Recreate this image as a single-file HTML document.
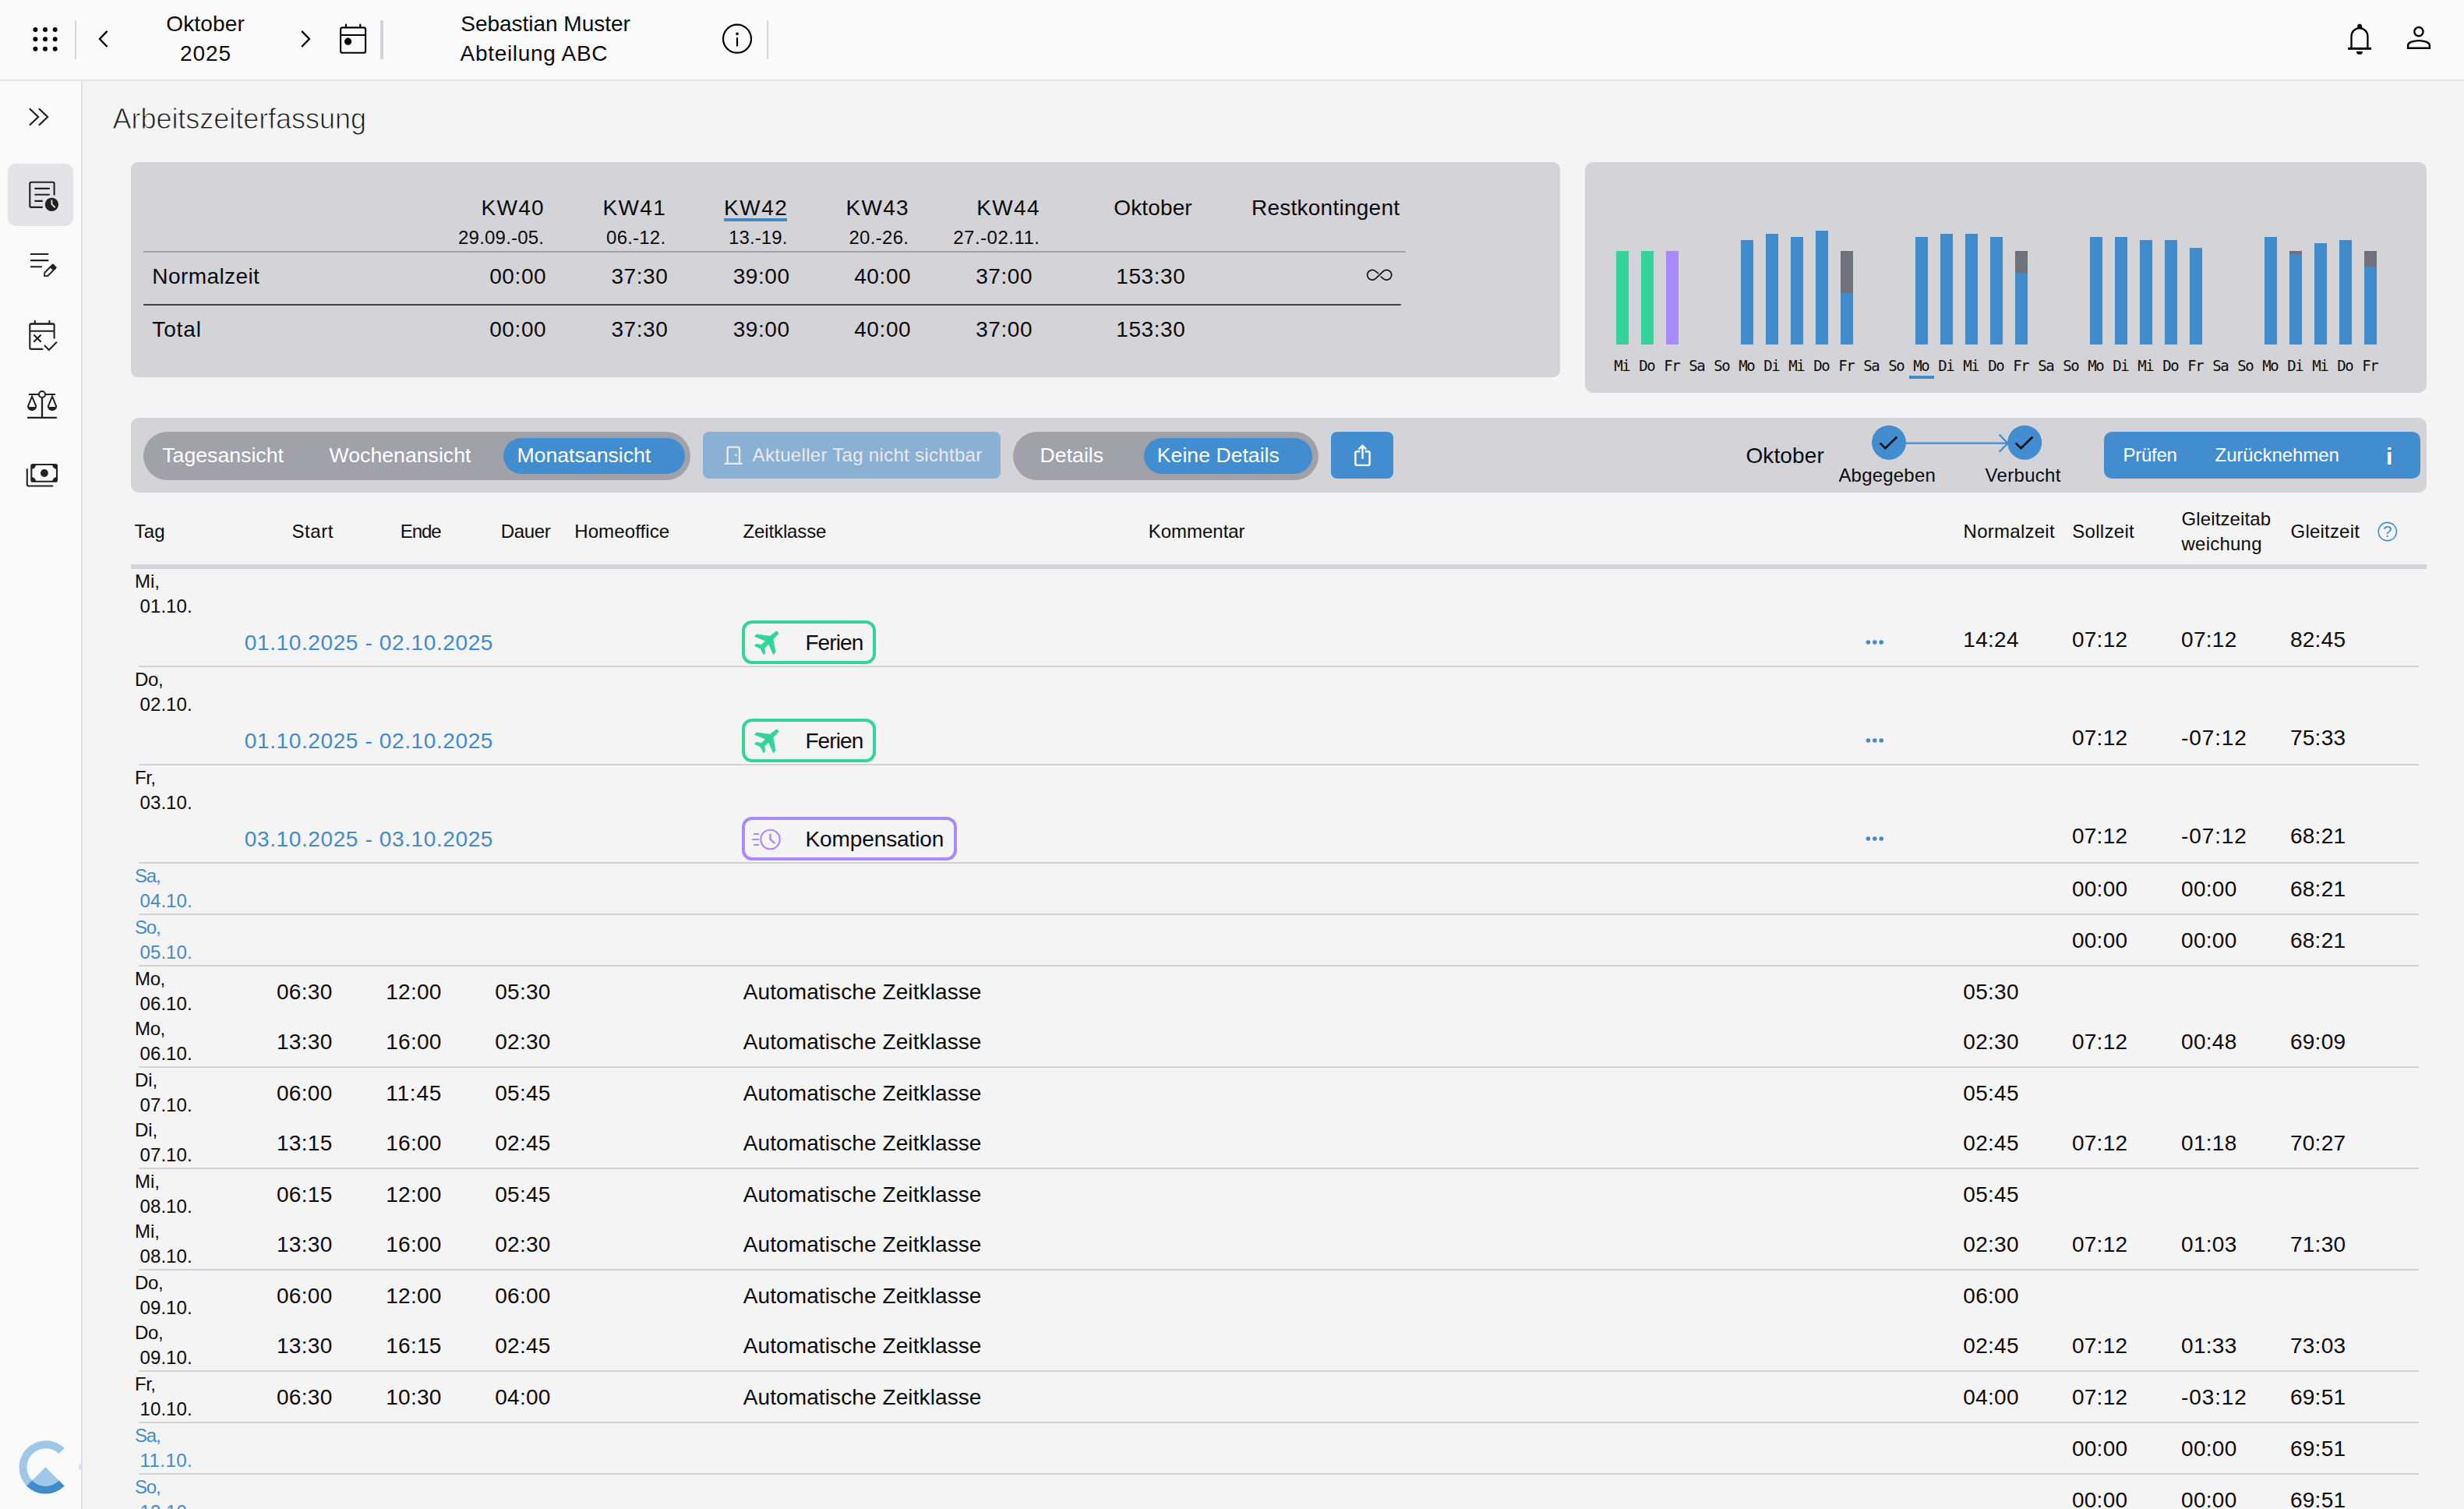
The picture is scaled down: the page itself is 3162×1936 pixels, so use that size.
<!DOCTYPE html>
<html lang="de"><head><meta charset="utf-8"><meta name="viewport" content="width=3162"><title>Arbeitszeiterfassung</title><style>
*{box-sizing:border-box;margin:0;padding:0}
html,body{width:3162px;height:1936px;overflow:hidden}
body{position:relative;background:#f4f4f5;font-family:"Liberation Sans", sans-serif;color:#0b0b0c;}
.b,.t,.i{position:absolute}
.t{white-space:pre;display:block}
.i{overflow:visible}
.m{font-family:"DejaVu Sans Mono", "Liberation Mono", monospace}
.bd{font-weight:bold}
.lt{-webkit-text-stroke:0.9px #f4f4f5}
header,nav,main,section,h1,table{display:block}
h1{font-weight:normal;font-size:inherit}
</style></head>
<body>
<header><div class="b" style="left:0px;top:0px;width:3162px;height:102px;background:#fafafa;"></div><div class="b" style="left:0px;top:102px;width:3162px;height:2px;background:#e3e3e7;"></div><svg class="i" style="left:40px;top:32px" width="36" height="36" viewBox="40 32 36 36" ><g fill="#000"><circle cx="45.4" cy="38" r="2.95"/><circle cx="58" cy="38" r="2.95"/><circle cx="70.7" cy="38" r="2.95"/><circle cx="45.4" cy="50.3" r="2.95"/><circle cx="58" cy="50.3" r="2.95"/><circle cx="70.7" cy="50.3" r="2.95"/><circle cx="45.4" cy="62.7" r="2.95"/><circle cx="58" cy="62.7" r="2.95"/><circle cx="70.7" cy="62.7" r="2.95"/></g></svg><div class="b" style="left:96px;top:26px;width:2px;height:50px;background:#d6d6db;"></div><svg class="i" style="left:120px;top:34px" width="26" height="32" viewBox="120 34 26 32" ><path fill="none" stroke="#000" stroke-width="2.3" stroke-linecap="butt" stroke-linejoin="miter" d="M137.6 39.9 L127.9 49.95 L137.6 60"/></svg><span class="t" id="t0" style="top:17px;font-size:28px;line-height:28px;letter-spacing:0.165px;left:-336.42px;width:1200px;text-align:center;">Oktober</span><span class="t" id="t1" style="top:55px;font-size:28px;line-height:28px;letter-spacing:0.901px;left:-336.05px;width:1200px;text-align:center;">2025</span><svg class="i" style="left:380px;top:34px" width="26" height="32" viewBox="380 34 26 32" ><path fill="none" stroke="#000" stroke-width="2.3" stroke-linecap="butt" stroke-linejoin="miter" d="M387.2 39.9 L396.9 49.95 L387.2 60"/></svg><svg class="i" style="left:432px;top:28px" width="42" height="44" viewBox="432 28 42 44" ><g fill="none" stroke="#000" stroke-width="2.1" stroke-linecap="butt" stroke-linejoin="round"><rect x="437.1" y="35.4" width="32" height="32.4" rx="2.4"/><path d="M437.1 45 H469.1 M443.9 30.8 V35.4 M462.3 30.8 V35.4"/></g><circle cx="446.6" cy="53.2" r="4.6" fill="#000"/></svg><div class="b" style="left:488px;top:26px;width:4px;height:50px;background:#d4d4d8;"></div><span class="t" id="t2" style="top:17px;font-size:28px;line-height:28px;letter-spacing:-0.026px;left:591.30px;">Sebastian Muster</span><span class="t" id="t3" style="top:55px;font-size:28px;line-height:28px;letter-spacing:0.702px;left:590.50px;">Abteilung ABC</span><svg class="i" style="left:924px;top:28px" width="44" height="44" viewBox="924 28 44 44" ><circle cx="946" cy="49.7" r="18" fill="none" stroke="#000" stroke-width="2.2"/><circle cx="946" cy="43.4" r="1.8" fill="#000"/><rect x="944.9" y="48.2" width="2.2" height="11.2" fill="#000"/></svg><div class="b" style="left:984px;top:26px;width:2px;height:50px;background:#d6d6db;"></div><svg class="i" style="left:3008px;top:26px" width="40" height="48" viewBox="3008 26 40 48" ><g fill="none" stroke="#000" stroke-width="2.3" stroke-linecap="butt" stroke-linejoin="miter"><path d="M3017.5 61 V46.5 A10.45 10.45 0 0 1 3038.4 46.5 V61"/></g><rect x="3013.1" y="60.9" width="29.9" height="2.9" fill="#000"/><path d="M3025.2 36 V33.7 A2.95 2.95 0 0 1 3031.1 33.7 V36 Z" fill="#000"/><path d="M3024 65.9 H3031.9 A3.95 3.95 0 0 1 3024 65.9 Z" fill="#000"/></svg><svg class="i" style="left:3084px;top:28px" width="40" height="42" viewBox="3084 28 40 42" ><g fill="none" stroke="#000" stroke-width="2.4" stroke-linejoin="miter"><circle cx="3103.95" cy="40.6" r="5.65"/><path d="M3090.1 61.75 V58 A13.9 5.9 0 0 1 3117.9 58 V61.75 Z"/></g></svg></header><nav><div class="b" style="left:0px;top:104px;width:104px;height:1832px;background:#fafafa;"></div><div class="b" style="left:104px;top:104px;width:2px;height:1832px;background:#e2e2e6;"></div><div class="b" style="left:101px;top:1878px;width:3px;height:8px;background:#d3e3f3;border-radius:2px;"></div><svg class="i" style="left:32px;top:134px" width="36" height="32" viewBox="32 134 36 32" ><path fill="none" stroke="#222" stroke-width="2.3" stroke-linecap="round" stroke-linejoin="round" d="M38.6 140 L49.2 150 L38.6 160 M50.6 140 L61.2 150 L50.6 160"/></svg><div class="b" style="left:10px;top:210px;width:84px;height:80px;background:#e4e4e7;border-radius:10px;"></div><svg class="i" style="left:32px;top:228px" width="48" height="48" viewBox="32 228 48 48" ><g fill="none" stroke="#222" stroke-width="2.1" stroke-linecap="butt" stroke-linejoin="round"><path d="M69.6 250.4 V235.6 A1.8 1.8 0 0 0 67.8 233.8 H40.1 A1.8 1.8 0 0 0 38.3 235.6 V264.1 A1.8 1.8 0 0 0 40.1 265.9 H54.8"/><path d="M44.4 241.9 H63.8 M44.4 249.8 H63.8 M44.4 257.9 H54.8"/></g><circle cx="66.4" cy="262.3" r="8.6" fill="#222"/><path d="M66.4 256.6 V261.9 L70.7 266.4" fill="none" stroke="#e4e4e7" stroke-width="1.9" stroke-linecap="butt" stroke-linejoin="miter"/></svg><svg class="i" style="left:32px;top:318px" width="48" height="42" viewBox="32 318 48 42" ><g fill="none" stroke="#222" stroke-width="2.1" stroke-linecap="butt" stroke-linejoin="round"><path d="M39 326 H62.2 M39 334.1 H62.2 M39 342.3 H53.9"/></g><path d="M56.2 354.95 V349.55 L66.72 339 Q67.85 337.86 68.98 339 L72.16 342.17 Q73.29 343.3 72.16 344.43 L61.62 354.95 Z" fill="#222"/><path d="M58 350.5 L64.87 343.66 L67.49 346.28 L60.63 353.14 L57.9 353.2 Z" fill="#fafafa"/></svg><svg class="i" style="left:32px;top:406px" width="48" height="48" viewBox="32 406 48 48" ><g fill="none" stroke="#222" stroke-width="2.1" stroke-linecap="butt" stroke-linejoin="round"><path d="M69.6 434.4 V417 A1.8 1.8 0 0 0 67.8 415.2 H40.1 A1.8 1.8 0 0 0 38.3 417 V446.1 A1.8 1.8 0 0 0 40.1 447.9 H55.3"/><path d="M38.3 424.7 H69.6 M44.8 411 V415.2 M63.4 411 V415.2 M39 415.7 H69"/><path d="M43.3 429.4 L52.7 438.8 M52.7 429.4 L43.3 438.8"/><path d="M56.9 443 L62.8 448.9 L72.9 438.7" stroke-linejoin="miter"/></g></svg><svg class="i" style="left:30px;top:498px" width="50" height="44" viewBox="30 498 50 44" ><g fill="none" stroke="#222" stroke-width="2.1" stroke-linecap="butt" stroke-linejoin="round"><path d="M36.9 506 H49.8 M58.2 506 H71 M35.1 535.9 H72.9"/><path d="M54 510.2 V535.9" stroke-width="2.3"/><circle cx="54" cy="506" r="4.05"/></g><path d="M41.1 508.6 L35.9 521.4 A5.3 5.3 0 0 0 46.300000000000004 521.4 Z" fill="none" stroke="#222" stroke-width="2" stroke-linejoin="miter" stroke-miterlimit="8"/><path d="M35.7 522 H46.5 A5.4 5 0 0 1 35.7 522 Z" fill="#222"/><path d="M67 508.6 L61.8 521.4 A5.3 5.3 0 0 0 72.2 521.4 Z" fill="none" stroke="#222" stroke-width="2" stroke-linejoin="miter" stroke-miterlimit="8"/><path d="M61.6 522 H72.4 A5.4 5 0 0 1 61.6 522 Z" fill="#222"/></svg><svg class="i" style="left:30px;top:590px" width="50" height="38" viewBox="30 590 50 38" ><path fill="none" stroke="#222" stroke-width="2.1" stroke-linecap="butt" stroke-linejoin="round" d="M34.8 601.2 V621.7 A1.8 1.8 0 0 0 36.6 623.5 H68.2"/><rect x="40.3" y="596" width="32.7" height="21.8" rx="1.8" fill="none" stroke="#222" stroke-width="2.1"/><path d="M40.3 596 H46.2 A5.9 5.9 0 0 1 40.3 601.9 Z M73 596 V601.9 A5.9 5.9 0 0 1 67.1 596 Z M40.3 617.8 V611.9 A5.9 5.9 0 0 1 46.2 617.8 Z M73 617.8 H67.1 A5.9 5.9 0 0 1 73 611.9 Z" fill="#222"/><circle cx="56.9" cy="607" r="4.9" fill="#222"/></svg><svg class="i" style="left:20px;top:1844px" width="80" height="78" viewBox="20 1844 80 78" ><path d="M34.08 1906.52 A34.4 34.4 0 0 1 82.72 1857.88 L75.51 1865.09 A24.2 24.2 0 0 0 41.29 1899.31 Z" fill="#9fc7ea"/><path d="M82.72 1906.52 A34.4 34.4 0 0 1 34.08 1906.52 L41.29 1899.31 A24.2 24.2 0 0 0 75.51 1899.31 Z" fill="#428bca"/><path d="M75.65 1899.45 A24.4 24.4 0 0 1 41.15 1899.45 L58.40 1882.20 A0 0 0 0 0 58.40 1882.20 Z" fill="#9fc7ea"/></svg></nav><main><h1><span class="t lt" id="t4" style="top:135px;font-size:36px;line-height:36px;color:#18181b;letter-spacing:-0.035px;left:144.50px;">Arbeitszeiterfassung</span></h1><section><div class="b" style="left:168px;top:208px;width:1834px;height:276px;background:#d4d4d8;border-radius:9px;"></div><span class="t" id="t5" style="top:253px;font-size:28px;line-height:28px;letter-spacing:1.317px;right:2463.08px;">KW40</span><span class="t" id="t6" style="top:293px;font-size:24px;line-height:24px;letter-spacing:0.212px;right:2463.79px;">29.09.-05.</span><span class="t" id="t7" style="top:253px;font-size:28px;line-height:28px;letter-spacing:1.317px;right:2306.98px;">KW41</span><span class="t" id="t8" style="top:293px;font-size:24px;line-height:24px;letter-spacing:0.214px;right:2307.69px;">06.-12.</span><span class="t" id="t9" style="top:253px;font-size:28px;line-height:28px;letter-spacing:1.583px;right:2150.52px;">KW42</span><span class="t" id="t10" style="top:293px;font-size:24px;line-height:24px;letter-spacing:0.097px;right:2151.60px;">13.-19.</span><span class="t" id="t11" style="top:253px;font-size:28px;line-height:28px;letter-spacing:1.250px;right:1995.15px;">KW43</span><span class="t" id="t12" style="top:293px;font-size:24px;line-height:24px;letter-spacing:0.314px;right:1995.69px;">20.-26.</span><span class="t" id="t13" style="top:253px;font-size:28px;line-height:28px;letter-spacing:1.383px;right:1827.02px;">KW44</span><span class="t" id="t14" style="top:293px;font-size:24px;line-height:24px;letter-spacing:0.499px;right:1827.50px;">27.-02.11.</span><div class="b" style="left:928.6px;top:280px;width:81.39999999999998px;height:4px;background:#428bca;"></div><span class="t" id="t15" style="top:253px;font-size:28px;line-height:28px;letter-spacing:0.132px;left:1429.30px;">Oktober</span><span class="t" id="t16" style="top:253px;font-size:28px;line-height:28px;letter-spacing:0.246px;left:1606.00px;">Restkontingent</span><div class="b" style="left:184px;top:322px;width:1620px;height:2px;background:#a1a1aa;"></div><span class="t" id="t17" style="top:341px;font-size:28px;line-height:28px;letter-spacing:0.421px;left:195.30px;">Normalzeit</span><span class="t" id="t18" style="top:341px;font-size:28px;line-height:28px;letter-spacing:0.580px;right:2460.82px;">00:00</span><span class="t" id="t19" style="top:341px;font-size:28px;line-height:28px;letter-spacing:0.580px;right:2304.62px;">37:30</span><span class="t" id="t20" style="top:341px;font-size:28px;line-height:28px;letter-spacing:0.580px;right:2148.42px;">39:00</span><span class="t" id="t21" style="top:341px;font-size:28px;line-height:28px;letter-spacing:0.580px;right:1992.82px;">40:00</span><span class="t" id="t22" style="top:341px;font-size:28px;line-height:28px;letter-spacing:0.580px;right:1836.92px;">37:00</span><span class="t" id="t23" style="top:341px;font-size:28px;line-height:28px;letter-spacing:0.552px;left:1432.30px;">153:30</span><span class="t" id="t24" style="top:409px;font-size:28px;line-height:28px;letter-spacing:0.861px;left:195.30px;">Total</span><span class="t" id="t25" style="top:409px;font-size:28px;line-height:28px;letter-spacing:0.580px;right:2460.82px;">00:00</span><span class="t" id="t26" style="top:409px;font-size:28px;line-height:28px;letter-spacing:0.580px;right:2304.62px;">37:30</span><span class="t" id="t27" style="top:409px;font-size:28px;line-height:28px;letter-spacing:0.580px;right:2148.42px;">39:00</span><span class="t" id="t28" style="top:409px;font-size:28px;line-height:28px;letter-spacing:0.580px;right:1992.82px;">40:00</span><span class="t" id="t29" style="top:409px;font-size:28px;line-height:28px;letter-spacing:0.580px;right:1836.92px;">37:00</span><span class="t" id="t30" style="top:409px;font-size:28px;line-height:28px;letter-spacing:0.552px;left:1432.30px;">153:30</span><svg class="i" style="left:1750px;top:342px" width="40" height="22" viewBox="1750 342 40 22" ><path d="M1768.6 350.6 L1765.1 347.9 A6.35 6.35 0 1 0 1765.1 357.6 L1775.3 347.9 A6.35 6.35 0 1 1 1775.3 357.6 L1772.3 355.1" fill="none" stroke="#111" stroke-width="1.7" stroke-linejoin="round" stroke-linecap="round"/></svg><div class="b" style="left:184px;top:389.6px;width:1614px;height:2.1999999999999886px;background:#3f3f46;border-radius:2px;"></div></section><section><div class="b" style="left:2034px;top:208px;width:1080px;height:296px;background:#d4d4d8;border-radius:10px;"></div><div class="b" style="left:2074px;top:322px;width:16px;height:120px;background:#34d399;"></div><span class="t m" id="t31" style="top:460px;font-size:19px;line-height:19px;letter-spacing:-1.291px;left:1481.35px;width:1200px;text-align:center;">Mi</span><div class="b" style="left:2106px;top:322px;width:16px;height:120px;background:#34d399;"></div><span class="t m" id="t32" style="top:460px;font-size:19px;line-height:19px;letter-spacing:-1.291px;left:1513.35px;width:1200px;text-align:center;">Do</span><div class="b" style="left:2138px;top:322px;width:16px;height:120px;background:#a78bfa;"></div><span class="t m" id="t33" style="top:460px;font-size:19px;line-height:19px;letter-spacing:-1.291px;left:1545.35px;width:1200px;text-align:center;">Fr</span><span class="t m" id="t34" style="top:460px;font-size:19px;line-height:19px;letter-spacing:-1.291px;left:1577.35px;width:1200px;text-align:center;">Sa</span><span class="t m" id="t35" style="top:460px;font-size:19px;line-height:19px;letter-spacing:-1.291px;left:1609.35px;width:1200px;text-align:center;">So</span><div class="b" style="left:2234px;top:308px;width:16px;height:134px;background:#428bca;"></div><span class="t m" id="t36" style="top:460px;font-size:19px;line-height:19px;letter-spacing:-1.291px;left:1641.35px;width:1200px;text-align:center;">Mo</span><div class="b" style="left:2266px;top:300px;width:16px;height:142px;background:#428bca;"></div><span class="t m" id="t37" style="top:460px;font-size:19px;line-height:19px;letter-spacing:-1.291px;left:1673.35px;width:1200px;text-align:center;">Di</span><div class="b" style="left:2298px;top:304px;width:16px;height:138px;background:#428bca;"></div><span class="t m" id="t38" style="top:460px;font-size:19px;line-height:19px;letter-spacing:-1.291px;left:1705.35px;width:1200px;text-align:center;">Mi</span><div class="b" style="left:2330px;top:296px;width:16px;height:146px;background:#428bca;"></div><span class="t m" id="t39" style="top:460px;font-size:19px;line-height:19px;letter-spacing:-1.291px;left:1737.35px;width:1200px;text-align:center;">Do</span><div class="b" style="left:2362px;top:322px;width:16px;height:120px;background:#71717a;"></div><div class="b" style="left:2362px;top:376px;width:16px;height:66px;background:#428bca;"></div><span class="t m" id="t40" style="top:460px;font-size:19px;line-height:19px;letter-spacing:-1.291px;left:1769.35px;width:1200px;text-align:center;">Fr</span><span class="t m" id="t41" style="top:460px;font-size:19px;line-height:19px;letter-spacing:-1.291px;left:1801.35px;width:1200px;text-align:center;">Sa</span><span class="t m" id="t42" style="top:460px;font-size:19px;line-height:19px;letter-spacing:-1.291px;left:1833.35px;width:1200px;text-align:center;">So</span><div class="b" style="left:2458px;top:304px;width:16px;height:138px;background:#428bca;"></div><span class="t m" id="t43" style="top:460px;font-size:19px;line-height:19px;letter-spacing:-1.291px;left:1865.35px;width:1200px;text-align:center;">Mo</span><div class="b" style="left:2490px;top:300px;width:16px;height:142px;background:#428bca;"></div><span class="t m" id="t44" style="top:460px;font-size:19px;line-height:19px;letter-spacing:-1.291px;left:1897.35px;width:1200px;text-align:center;">Di</span><div class="b" style="left:2522px;top:300px;width:16px;height:142px;background:#428bca;"></div><span class="t m" id="t45" style="top:460px;font-size:19px;line-height:19px;letter-spacing:-1.291px;left:1929.35px;width:1200px;text-align:center;">Mi</span><div class="b" style="left:2554px;top:304px;width:16px;height:138px;background:#428bca;"></div><span class="t m" id="t46" style="top:460px;font-size:19px;line-height:19px;letter-spacing:-1.291px;left:1961.35px;width:1200px;text-align:center;">Do</span><div class="b" style="left:2586px;top:322px;width:16px;height:120px;background:#71717a;"></div><div class="b" style="left:2586px;top:350px;width:16px;height:92px;background:#428bca;"></div><span class="t m" id="t47" style="top:460px;font-size:19px;line-height:19px;letter-spacing:-1.291px;left:1993.35px;width:1200px;text-align:center;">Fr</span><span class="t m" id="t48" style="top:460px;font-size:19px;line-height:19px;letter-spacing:-1.291px;left:2025.35px;width:1200px;text-align:center;">Sa</span><span class="t m" id="t49" style="top:460px;font-size:19px;line-height:19px;letter-spacing:-1.291px;left:2057.35px;width:1200px;text-align:center;">So</span><div class="b" style="left:2682px;top:304px;width:16px;height:138px;background:#428bca;"></div><span class="t m" id="t50" style="top:460px;font-size:19px;line-height:19px;letter-spacing:-1.291px;left:2089.35px;width:1200px;text-align:center;">Mo</span><div class="b" style="left:2714px;top:304px;width:16px;height:138px;background:#428bca;"></div><span class="t m" id="t51" style="top:460px;font-size:19px;line-height:19px;letter-spacing:-1.291px;left:2121.35px;width:1200px;text-align:center;">Di</span><div class="b" style="left:2746px;top:308px;width:16px;height:134px;background:#428bca;"></div><span class="t m" id="t52" style="top:460px;font-size:19px;line-height:19px;letter-spacing:-1.291px;left:2153.35px;width:1200px;text-align:center;">Mi</span><div class="b" style="left:2778px;top:308px;width:16px;height:134px;background:#428bca;"></div><span class="t m" id="t53" style="top:460px;font-size:19px;line-height:19px;letter-spacing:-1.291px;left:2185.35px;width:1200px;text-align:center;">Do</span><div class="b" style="left:2810px;top:318px;width:16px;height:124px;background:#428bca;"></div><span class="t m" id="t54" style="top:460px;font-size:19px;line-height:19px;letter-spacing:-1.291px;left:2217.35px;width:1200px;text-align:center;">Fr</span><span class="t m" id="t55" style="top:460px;font-size:19px;line-height:19px;letter-spacing:-1.291px;left:2249.35px;width:1200px;text-align:center;">Sa</span><span class="t m" id="t56" style="top:460px;font-size:19px;line-height:19px;letter-spacing:-1.291px;left:2281.35px;width:1200px;text-align:center;">So</span><div class="b" style="left:2906px;top:304px;width:16px;height:138px;background:#428bca;"></div><span class="t m" id="t57" style="top:460px;font-size:19px;line-height:19px;letter-spacing:-1.291px;left:2313.35px;width:1200px;text-align:center;">Mo</span><div class="b" style="left:2938px;top:322px;width:16px;height:120px;background:#71717a;"></div><div class="b" style="left:2938px;top:326px;width:16px;height:116px;background:#428bca;"></div><span class="t m" id="t58" style="top:460px;font-size:19px;line-height:19px;letter-spacing:-1.291px;left:2345.35px;width:1200px;text-align:center;">Di</span><div class="b" style="left:2970px;top:312px;width:16px;height:130px;background:#428bca;"></div><span class="t m" id="t59" style="top:460px;font-size:19px;line-height:19px;letter-spacing:-1.291px;left:2377.35px;width:1200px;text-align:center;">Mi</span><div class="b" style="left:3002px;top:308px;width:16px;height:134px;background:#428bca;"></div><span class="t m" id="t60" style="top:460px;font-size:19px;line-height:19px;letter-spacing:-1.291px;left:2409.35px;width:1200px;text-align:center;">Do</span><div class="b" style="left:3034px;top:322px;width:16px;height:120px;background:#71717a;"></div><div class="b" style="left:3034px;top:342px;width:16px;height:100px;background:#428bca;"></div><span class="t m" id="t61" style="top:460px;font-size:19px;line-height:19px;letter-spacing:-1.291px;left:2441.35px;width:1200px;text-align:center;">Fr</span><div class="b" style="left:2450px;top:482px;width:32px;height:4px;background:#428bca;"></div></section><section><div class="b" style="left:168px;top:536px;width:2946px;height:96px;background:#d4d4d8;border-radius:10px;"></div><div class="b" style="left:184px;top:554px;width:702px;height:62px;background:#a1a1aa;border-radius:31px;"></div><div class="b" style="left:646px;top:562px;width:232.5px;height:46px;background:#428dcf;border-radius:23px;"></div><span class="t" id="t62" style="top:571px;font-size:26.667px;line-height:26.667px;color:#fff;left:208.30px;">Tagesansicht</span><span class="t" id="t63" style="top:571px;font-size:26.667px;line-height:26.667px;color:#fff;left:422.60px;">Wochenansicht</span><span class="t" id="t64" style="top:571px;font-size:26.667px;line-height:26.667px;color:#fff;left:663.40px;">Monatsansicht</span><div class="b" style="left:0;top:0;opacity:.5"><div class="b" style="left:902px;top:554px;width:382px;height:60px;background:#428dcf;border-radius:8px;"></div><svg class="i" style="left:926px;top:568px" width="30" height="32" viewBox="926 568 30 32" ><g fill="none" stroke="#fff" stroke-width="2.3" stroke-linecap="butt" stroke-linejoin="round"><path d="M933.6 594.8 V575.8 A2.2 2.2 0 0 1 935.8 573.6 H946.8 A2.2 2.2 0 0 1 949 575.8 V594.8 M929.7 594.8 H952.9"/></g><rect x="942.9" y="582.8" width="2.9" height="2.2" rx="0.6" fill="#fff"/></svg><span class="t" id="t65" style="top:572px;font-size:24px;line-height:24px;color:#fff;letter-spacing:0.305px;left:965.60px;">Aktueller Tag nicht sichtbar</span></div><div class="b" style="left:1300px;top:554px;width:392px;height:62px;background:#a1a1aa;border-radius:31px;"></div><div class="b" style="left:1467.5px;top:562px;width:216.79999999999995px;height:46px;background:#428dcf;border-radius:23px;"></div><span class="t" id="t66" style="top:571px;font-size:26.667px;line-height:26.667px;color:#fff;left:1334.60px;">Details</span><span class="t" id="t67" style="top:571px;font-size:26.667px;line-height:26.667px;color:#fff;left:1484.80px;">Keine Details</span><div class="b" style="left:1708px;top:554px;width:80px;height:60px;background:#428dcf;border-radius:8px;"></div><svg class="i" style="left:1732px;top:564px" width="34" height="38" viewBox="1732 564 34 38" ><g fill="none" stroke="#fff" stroke-width="2.4" stroke-linecap="butt" stroke-linejoin="round"><path d="M1745.2 579.2 H1741.2 A1.8 1.8 0 0 0 1739.4 581 V595.1 A1.8 1.8 0 0 0 1741.2 596.9 H1755.8 A1.8 1.8 0 0 0 1757.6 595.1 V581 A1.8 1.8 0 0 0 1755.8 579.2 H1751.8"/><path d="M1748.5 588.8 V572.4 M1743.6 576.6 L1748.5 571.7 L1753.4 576.6" stroke-linejoin="miter"/></g></svg><span class="t" id="t68" style="top:571px;font-size:28px;line-height:28px;letter-spacing:0.132px;left:2240.40px;">Oktober</span><svg class="i" style="left:2398px;top:542px" width="226" height="52" viewBox="2398 542 226 52" ><path d="M2445 568.7 H2576.4 M2565.6 557.6 L2576.6 568.7 L2565.6 579.8" fill="none" stroke="#428bca" stroke-width="2.2" stroke-linecap="butt" stroke-linejoin="miter"/><circle cx="2424" cy="567.8" r="22" fill="#428dcf"/><circle cx="2598.2" cy="567.8" r="22" fill="#428dcf"/><path d="M2412.6 568.4 L2419.4 575.1 L2434.3 560.5" fill="none" stroke="#111" stroke-width="2.6" stroke-linecap="butt" stroke-linejoin="miter"/><path d="M2586.7 568.4 L2593.5 575.1 L2608.4 560.5" fill="none" stroke="#111" stroke-width="2.6" stroke-linecap="butt" stroke-linejoin="miter"/></svg><span class="t" id="t69" style="top:598px;font-size:24px;line-height:24px;letter-spacing:0.200px;left:1821.70px;width:1200px;text-align:center;">Abgegeben</span><span class="t" id="t70" style="top:598px;font-size:24px;line-height:24px;letter-spacing:0.295px;left:1996.15px;width:1200px;text-align:center;">Verbucht</span><div class="b" style="left:2700px;top:554px;width:406px;height:60px;background:#428dcf;border-radius:10px;"></div><span class="t" id="t71" style="top:572px;font-size:24px;line-height:24px;color:#fff;letter-spacing:-0.304px;left:2724.60px;">Prüfen</span><span class="t" id="t72" style="top:572px;font-size:24px;line-height:24px;color:#fff;letter-spacing:-0.080px;left:2842.60px;">Zurücknehmen</span><span class="t bd" id="t73" style="top:571px;font-size:30px;line-height:30px;color:#fff;left:2466.20px;width:1200px;text-align:center;">i</span></section><section><span class="t" id="t74" style="top:670px;font-size:24px;line-height:24px;letter-spacing:0.148px;left:172.50px;">Tag</span><span class="t" id="t75" style="top:670px;font-size:24px;line-height:24px;letter-spacing:0.578px;right:2734.02px;">Start</span><span class="t" id="t76" style="top:670px;font-size:24px;line-height:24px;letter-spacing:-1.021px;right:2596.32px;">Ende</span><span class="t" id="t77" style="top:670px;font-size:24px;line-height:24px;letter-spacing:-0.344px;right:2455.54px;">Dauer</span><span class="t" id="t78" style="top:670px;font-size:24px;line-height:24px;letter-spacing:0.116px;left:737.20px;">Homeoffice</span><span class="t" id="t79" style="top:670px;font-size:24px;line-height:24px;letter-spacing:-0.139px;left:953.60px;">Zeitklasse</span><span class="t" id="t80" style="top:670px;font-size:24px;line-height:24px;letter-spacing:-0.031px;left:1473.80px;">Kommentar</span><span class="t" id="t81" style="top:670px;font-size:24px;line-height:24px;letter-spacing:0.255px;left:2519.60px;">Normalzeit</span><span class="t" id="t82" style="top:670px;font-size:24px;line-height:24px;letter-spacing:0.318px;left:2659.20px;">Sollzeit</span><span class="t" id="t83" style="top:654px;font-size:24px;line-height:24px;letter-spacing:0.121px;left:2799.50px;">Gleitzeitab</span><span class="t" id="t84" style="top:686px;font-size:24px;line-height:24px;letter-spacing:0.228px;left:2799.50px;">weichung</span><span class="t" id="t85" style="top:670px;font-size:24px;line-height:24px;letter-spacing:0.212px;left:2939.50px;">Gleitzeit</span><svg class="i" style="left:3048px;top:666px" width="32" height="32" viewBox="3048 666 32 32" ><circle cx="3063.8" cy="682" r="11.6" fill="none" stroke="#428bca" stroke-width="1.6"/></svg><span class="t" id="t86" style="top:672px;font-size:20px;line-height:20px;color:#428bca;left:2463.90px;width:1200px;text-align:center;">?</span><div class="b" style="left:168px;top:724px;width:2946px;height:6px;background:#d4d4d8;"></div><div><span class="t" id="t87" style="top:734px;font-size:24px;line-height:24px;left:173.00px;">Mi,</span><span class="t" id="t88" style="top:766px;font-size:24px;line-height:24px;letter-spacing:0.053px;left:179.60px;">01.10.</span><span class="t" id="t89" style="top:811px;font-size:28px;line-height:28px;color:#428bca;letter-spacing:0.611px;left:313.80px;">01.10.2025 - 02.10.2025</span><div class="b" style="left:952px;top:796px;width:172px;height:56px;border:4px solid #34d399;border-radius:13px"></div><svg class="i" style="left:964px;top:806px" width="40" height="38" viewBox="964 806 40 38" ><path d="M988.2 816.2 L994.9 810.9 A2.25 2.25 0 0 1 998.1 814.1 L992.0 820.2 L995.1 836.8 L992.3 839.8 L986.5 826.2 L980.9 831.5 L982.0 837.4 L979.9 839.8 L975.9 832.1 L968.3 828.5 L970.6 826.2 L976.9 827.5 L982.5 822.2 L968.4 816.4 L970.9 813.9 Z" fill="#34d399" stroke="#34d399" stroke-width="0.8" stroke-linejoin="round"/></svg><span class="t" id="t90" style="top:811px;font-size:28px;line-height:28px;letter-spacing:-0.875px;left:1033.40px;">Ferien</span><svg class="i" style="left:2390px;top:818px" width="32" height="12" viewBox="2390 818 32 12" ><circle cx="2397.4" cy="824" r="2.8" fill="#428bca"/><circle cx="2405.8" cy="824" r="2.8" fill="#428bca"/><circle cx="2414.2" cy="824" r="2.8" fill="#428bca"/></svg><span class="t" id="t91" style="top:807px;font-size:28px;line-height:28px;letter-spacing:0.280px;left:2519.30px;">14:24</span><span class="t" id="t92" style="top:807px;font-size:28px;line-height:28px;letter-spacing:0.280px;left:2658.90px;">07:12</span><span class="t" id="t93" style="top:807px;font-size:28px;line-height:28px;letter-spacing:0.280px;left:2799.10px;">07:12</span><span class="t" id="t94" style="top:807px;font-size:28px;line-height:28px;letter-spacing:0.280px;left:2938.90px;">82:45</span><div class="b" style="left:178px;top:854px;width:2926px;height:2px;background:#d4d4d8;"></div></div><div><span class="t" id="t95" style="top:860px;font-size:24px;line-height:24px;letter-spacing:-0.280px;left:173.00px;">Do,</span><span class="t" id="t96" style="top:892px;font-size:24px;line-height:24px;letter-spacing:0.053px;left:179.60px;">02.10.</span><span class="t" id="t97" style="top:937px;font-size:28px;line-height:28px;color:#428bca;letter-spacing:0.611px;left:313.80px;">01.10.2025 - 02.10.2025</span><div class="b" style="left:952px;top:922px;width:172px;height:56px;border:4px solid #34d399;border-radius:13px"></div><svg class="i" style="left:964px;top:932px" width="40" height="38" viewBox="964 932 40 38" ><path d="M988.2 942.2 L994.9 936.9 A2.25 2.25 0 0 1 998.1 940.1 L992.0 946.2 L995.1 962.8 L992.3 965.8 L986.5 952.2 L980.9 957.5 L982.0 963.4 L979.9 965.8 L975.9 958.1 L968.3 954.5 L970.6 952.2 L976.9 953.5 L982.5 948.2 L968.4 942.4 L970.9 939.9 Z" fill="#34d399" stroke="#34d399" stroke-width="0.8" stroke-linejoin="round"/></svg><span class="t" id="t98" style="top:937px;font-size:28px;line-height:28px;letter-spacing:-0.875px;left:1033.40px;">Ferien</span><svg class="i" style="left:2390px;top:944px" width="32" height="12" viewBox="2390 944 32 12" ><circle cx="2397.4" cy="950" r="2.8" fill="#428bca"/><circle cx="2405.8" cy="950" r="2.8" fill="#428bca"/><circle cx="2414.2" cy="950" r="2.8" fill="#428bca"/></svg><span class="t" id="t99" style="top:933px;font-size:28px;line-height:28px;letter-spacing:0.280px;left:2658.90px;">07:12</span><span class="t" id="t100" style="top:933px;font-size:28px;line-height:28px;letter-spacing:0.879px;left:2799.10px;">-07:12</span><span class="t" id="t101" style="top:933px;font-size:28px;line-height:28px;letter-spacing:0.280px;left:2938.90px;">75:33</span><div class="b" style="left:178px;top:980px;width:2926px;height:2px;background:#d4d4d8;"></div></div><div><span class="t" id="t102" style="top:986px;font-size:24px;line-height:24px;letter-spacing:-0.500px;left:173.00px;">Fr,</span><span class="t" id="t103" style="top:1018px;font-size:24px;line-height:24px;letter-spacing:0.053px;left:179.60px;">03.10.</span><span class="t" id="t104" style="top:1063px;font-size:28px;line-height:28px;color:#428bca;letter-spacing:0.611px;left:313.80px;">03.10.2025 - 03.10.2025</span><div class="b" style="left:952px;top:1048px;width:276px;height:56px;border:4px solid #a78bfa;border-radius:13px"></div><svg class="i" style="left:962px;top:1060px" width="44" height="34" viewBox="962 1060 44 34" ><g fill="none" stroke="#a78bfa" stroke-width="2.15" stroke-linecap="butt" stroke-linejoin="miter"><circle cx="988.5" cy="1077" r="12.25"/><path d="M988.5 1069.8 V1077 L994.4 1082.2" stroke-width="2.4"/><path d="M967 1070 H974 M965.1 1077 H974 M967 1084 H974" stroke-width="2"/></g></svg><span class="t" id="t105" style="top:1063px;font-size:28px;line-height:28px;letter-spacing:-0.092px;left:1033.40px;">Kompensation</span><svg class="i" style="left:2390px;top:1070px" width="32" height="12" viewBox="2390 1070 32 12" ><circle cx="2397.4" cy="1076" r="2.8" fill="#428bca"/><circle cx="2405.8" cy="1076" r="2.8" fill="#428bca"/><circle cx="2414.2" cy="1076" r="2.8" fill="#428bca"/></svg><span class="t" id="t106" style="top:1059px;font-size:28px;line-height:28px;letter-spacing:0.280px;left:2658.90px;">07:12</span><span class="t" id="t107" style="top:1059px;font-size:28px;line-height:28px;letter-spacing:0.879px;left:2799.10px;">-07:12</span><span class="t" id="t108" style="top:1059px;font-size:28px;line-height:28px;letter-spacing:0.280px;left:2938.90px;">68:21</span><div class="b" style="left:178px;top:1106px;width:2926px;height:2px;background:#d4d4d8;"></div></div><div><span class="t" id="t109" style="top:1112px;font-size:24px;line-height:24px;color:#428bca;letter-spacing:-1.216px;left:173.00px;">Sa,</span><span class="t" id="t110" style="top:1144px;font-size:24px;line-height:24px;color:#428bca;letter-spacing:0.053px;left:179.60px;">04.10.</span><span class="t" id="t111" style="top:1127px;font-size:28px;line-height:28px;letter-spacing:0.280px;left:2658.90px;">00:00</span><span class="t" id="t112" style="top:1127px;font-size:28px;line-height:28px;letter-spacing:0.280px;left:2799.10px;">00:00</span><span class="t" id="t113" style="top:1127px;font-size:28px;line-height:28px;letter-spacing:0.280px;left:2938.90px;">68:21</span><div class="b" style="left:178px;top:1172px;width:2926px;height:2px;background:#d4d4d8;"></div></div><div><span class="t" id="t114" style="top:1178px;font-size:24px;line-height:24px;color:#428bca;letter-spacing:-1.216px;left:173.00px;">So,</span><span class="t" id="t115" style="top:1210px;font-size:24px;line-height:24px;color:#428bca;letter-spacing:0.053px;left:179.60px;">05.10.</span><span class="t" id="t116" style="top:1193px;font-size:28px;line-height:28px;letter-spacing:0.280px;left:2658.90px;">00:00</span><span class="t" id="t117" style="top:1193px;font-size:28px;line-height:28px;letter-spacing:0.280px;left:2799.10px;">00:00</span><span class="t" id="t118" style="top:1193px;font-size:28px;line-height:28px;letter-spacing:0.280px;left:2938.90px;">68:21</span><div class="b" style="left:178px;top:1238px;width:2926px;height:2px;background:#d4d4d8;"></div></div><div><span class="t" id="t119" style="top:1244px;font-size:24px;line-height:24px;letter-spacing:-0.358px;left:173.00px;">Mo,</span><span class="t" id="t120" style="top:1276px;font-size:24px;line-height:24px;letter-spacing:0.053px;left:179.60px;">06.10.</span><span class="t" id="t121" style="top:1259px;font-size:28px;line-height:28px;letter-spacing:0.280px;right:2735.52px;">06:30</span><span class="t" id="t122" style="top:1259px;font-size:28px;line-height:28px;letter-spacing:0.280px;right:2595.32px;">12:00</span><span class="t" id="t123" style="top:1259px;font-size:28px;line-height:28px;letter-spacing:0.280px;right:2455.32px;">05:30</span><span class="t" id="t124" style="top:1259px;font-size:28px;line-height:28px;letter-spacing:0.097px;left:953.80px;">Automatische Zeitklasse</span><span class="t" id="t125" style="top:1259px;font-size:28px;line-height:28px;letter-spacing:0.280px;left:2519.30px;">05:30</span></div><div><span class="t" id="t126" style="top:1308px;font-size:24px;line-height:24px;letter-spacing:-0.358px;left:173.00px;">Mo,</span><span class="t" id="t127" style="top:1340px;font-size:24px;line-height:24px;letter-spacing:0.053px;left:179.60px;">06.10.</span><span class="t" id="t128" style="top:1323px;font-size:28px;line-height:28px;letter-spacing:0.280px;right:2735.52px;">13:30</span><span class="t" id="t129" style="top:1323px;font-size:28px;line-height:28px;letter-spacing:0.280px;right:2595.32px;">16:00</span><span class="t" id="t130" style="top:1323px;font-size:28px;line-height:28px;letter-spacing:0.280px;right:2455.32px;">02:30</span><span class="t" id="t131" style="top:1323px;font-size:28px;line-height:28px;letter-spacing:0.097px;left:953.80px;">Automatische Zeitklasse</span><span class="t" id="t132" style="top:1323px;font-size:28px;line-height:28px;letter-spacing:0.280px;left:2519.30px;">02:30</span><span class="t" id="t133" style="top:1323px;font-size:28px;line-height:28px;letter-spacing:0.280px;left:2658.90px;">07:12</span><span class="t" id="t134" style="top:1323px;font-size:28px;line-height:28px;letter-spacing:0.280px;left:2799.10px;">00:48</span><span class="t" id="t135" style="top:1323px;font-size:28px;line-height:28px;letter-spacing:0.280px;left:2938.90px;">69:09</span><div class="b" style="left:178px;top:1368px;width:2926px;height:2px;background:#d4d4d8;"></div></div><div><span class="t" id="t136" style="top:1374px;font-size:24px;line-height:24px;letter-spacing:-0.122px;left:173.00px;">Di,</span><span class="t" id="t137" style="top:1406px;font-size:24px;line-height:24px;letter-spacing:0.053px;left:179.60px;">07.10.</span><span class="t" id="t138" style="top:1389px;font-size:28px;line-height:28px;letter-spacing:0.280px;right:2735.52px;">06:00</span><span class="t" id="t139" style="top:1389px;font-size:28px;line-height:28px;letter-spacing:0.800px;right:2594.80px;">11:45</span><span class="t" id="t140" style="top:1389px;font-size:28px;line-height:28px;letter-spacing:0.280px;right:2455.32px;">05:45</span><span class="t" id="t141" style="top:1389px;font-size:28px;line-height:28px;letter-spacing:0.097px;left:953.80px;">Automatische Zeitklasse</span><span class="t" id="t142" style="top:1389px;font-size:28px;line-height:28px;letter-spacing:0.280px;left:2519.30px;">05:45</span></div><div><span class="t" id="t143" style="top:1438px;font-size:24px;line-height:24px;letter-spacing:-0.122px;left:173.00px;">Di,</span><span class="t" id="t144" style="top:1470px;font-size:24px;line-height:24px;letter-spacing:0.053px;left:179.60px;">07.10.</span><span class="t" id="t145" style="top:1453px;font-size:28px;line-height:28px;letter-spacing:0.280px;right:2735.52px;">13:15</span><span class="t" id="t146" style="top:1453px;font-size:28px;line-height:28px;letter-spacing:0.280px;right:2595.32px;">16:00</span><span class="t" id="t147" style="top:1453px;font-size:28px;line-height:28px;letter-spacing:0.280px;right:2455.32px;">02:45</span><span class="t" id="t148" style="top:1453px;font-size:28px;line-height:28px;letter-spacing:0.097px;left:953.80px;">Automatische Zeitklasse</span><span class="t" id="t149" style="top:1453px;font-size:28px;line-height:28px;letter-spacing:0.280px;left:2519.30px;">02:45</span><span class="t" id="t150" style="top:1453px;font-size:28px;line-height:28px;letter-spacing:0.280px;left:2658.90px;">07:12</span><span class="t" id="t151" style="top:1453px;font-size:28px;line-height:28px;letter-spacing:0.280px;left:2799.10px;">01:18</span><span class="t" id="t152" style="top:1453px;font-size:28px;line-height:28px;letter-spacing:0.280px;left:2938.90px;">70:27</span><div class="b" style="left:178px;top:1498px;width:2926px;height:2px;background:#d4d4d8;"></div></div><div><span class="t" id="t153" style="top:1504px;font-size:24px;line-height:24px;left:173.00px;">Mi,</span><span class="t" id="t154" style="top:1536px;font-size:24px;line-height:24px;letter-spacing:0.053px;left:179.60px;">08.10.</span><span class="t" id="t155" style="top:1519px;font-size:28px;line-height:28px;letter-spacing:0.280px;right:2735.52px;">06:15</span><span class="t" id="t156" style="top:1519px;font-size:28px;line-height:28px;letter-spacing:0.280px;right:2595.32px;">12:00</span><span class="t" id="t157" style="top:1519px;font-size:28px;line-height:28px;letter-spacing:0.280px;right:2455.32px;">05:45</span><span class="t" id="t158" style="top:1519px;font-size:28px;line-height:28px;letter-spacing:0.097px;left:953.80px;">Automatische Zeitklasse</span><span class="t" id="t159" style="top:1519px;font-size:28px;line-height:28px;letter-spacing:0.280px;left:2519.30px;">05:45</span></div><div><span class="t" id="t160" style="top:1568px;font-size:24px;line-height:24px;left:173.00px;">Mi,</span><span class="t" id="t161" style="top:1600px;font-size:24px;line-height:24px;letter-spacing:0.053px;left:179.60px;">08.10.</span><span class="t" id="t162" style="top:1583px;font-size:28px;line-height:28px;letter-spacing:0.280px;right:2735.52px;">13:30</span><span class="t" id="t163" style="top:1583px;font-size:28px;line-height:28px;letter-spacing:0.280px;right:2595.32px;">16:00</span><span class="t" id="t164" style="top:1583px;font-size:28px;line-height:28px;letter-spacing:0.280px;right:2455.32px;">02:30</span><span class="t" id="t165" style="top:1583px;font-size:28px;line-height:28px;letter-spacing:0.097px;left:953.80px;">Automatische Zeitklasse</span><span class="t" id="t166" style="top:1583px;font-size:28px;line-height:28px;letter-spacing:0.280px;left:2519.30px;">02:30</span><span class="t" id="t167" style="top:1583px;font-size:28px;line-height:28px;letter-spacing:0.280px;left:2658.90px;">07:12</span><span class="t" id="t168" style="top:1583px;font-size:28px;line-height:28px;letter-spacing:0.280px;left:2799.10px;">01:03</span><span class="t" id="t169" style="top:1583px;font-size:28px;line-height:28px;letter-spacing:0.280px;left:2938.90px;">71:30</span><div class="b" style="left:178px;top:1628px;width:2926px;height:2px;background:#d4d4d8;"></div></div><div><span class="t" id="t170" style="top:1634px;font-size:24px;line-height:24px;letter-spacing:-0.280px;left:173.00px;">Do,</span><span class="t" id="t171" style="top:1666px;font-size:24px;line-height:24px;letter-spacing:0.053px;left:179.60px;">09.10.</span><span class="t" id="t172" style="top:1649px;font-size:28px;line-height:28px;letter-spacing:0.280px;right:2735.52px;">06:00</span><span class="t" id="t173" style="top:1649px;font-size:28px;line-height:28px;letter-spacing:0.280px;right:2595.32px;">12:00</span><span class="t" id="t174" style="top:1649px;font-size:28px;line-height:28px;letter-spacing:0.280px;right:2455.32px;">06:00</span><span class="t" id="t175" style="top:1649px;font-size:28px;line-height:28px;letter-spacing:0.097px;left:953.80px;">Automatische Zeitklasse</span><span class="t" id="t176" style="top:1649px;font-size:28px;line-height:28px;letter-spacing:0.280px;left:2519.30px;">06:00</span></div><div><span class="t" id="t177" style="top:1698px;font-size:24px;line-height:24px;letter-spacing:-0.280px;left:173.00px;">Do,</span><span class="t" id="t178" style="top:1730px;font-size:24px;line-height:24px;letter-spacing:0.053px;left:179.60px;">09.10.</span><span class="t" id="t179" style="top:1713px;font-size:28px;line-height:28px;letter-spacing:0.280px;right:2735.52px;">13:30</span><span class="t" id="t180" style="top:1713px;font-size:28px;line-height:28px;letter-spacing:0.280px;right:2595.32px;">16:15</span><span class="t" id="t181" style="top:1713px;font-size:28px;line-height:28px;letter-spacing:0.280px;right:2455.32px;">02:45</span><span class="t" id="t182" style="top:1713px;font-size:28px;line-height:28px;letter-spacing:0.097px;left:953.80px;">Automatische Zeitklasse</span><span class="t" id="t183" style="top:1713px;font-size:28px;line-height:28px;letter-spacing:0.280px;left:2519.30px;">02:45</span><span class="t" id="t184" style="top:1713px;font-size:28px;line-height:28px;letter-spacing:0.280px;left:2658.90px;">07:12</span><span class="t" id="t185" style="top:1713px;font-size:28px;line-height:28px;letter-spacing:0.280px;left:2799.10px;">01:33</span><span class="t" id="t186" style="top:1713px;font-size:28px;line-height:28px;letter-spacing:0.280px;left:2938.90px;">73:03</span><div class="b" style="left:178px;top:1758px;width:2926px;height:2px;background:#d4d4d8;"></div></div><div><span class="t" id="t187" style="top:1764px;font-size:24px;line-height:24px;letter-spacing:-0.500px;left:173.00px;">Fr,</span><span class="t" id="t188" style="top:1796px;font-size:24px;line-height:24px;letter-spacing:0.053px;left:179.60px;">10.10.</span><span class="t" id="t189" style="top:1779px;font-size:28px;line-height:28px;letter-spacing:0.280px;right:2735.52px;">06:30</span><span class="t" id="t190" style="top:1779px;font-size:28px;line-height:28px;letter-spacing:0.280px;right:2595.32px;">10:30</span><span class="t" id="t191" style="top:1779px;font-size:28px;line-height:28px;letter-spacing:0.280px;right:2455.32px;">04:00</span><span class="t" id="t192" style="top:1779px;font-size:28px;line-height:28px;letter-spacing:0.097px;left:953.80px;">Automatische Zeitklasse</span><span class="t" id="t193" style="top:1779px;font-size:28px;line-height:28px;letter-spacing:0.280px;left:2519.30px;">04:00</span><span class="t" id="t194" style="top:1779px;font-size:28px;line-height:28px;letter-spacing:0.280px;left:2658.90px;">07:12</span><span class="t" id="t195" style="top:1779px;font-size:28px;line-height:28px;letter-spacing:0.879px;left:2799.10px;">-03:12</span><span class="t" id="t196" style="top:1779px;font-size:28px;line-height:28px;letter-spacing:0.280px;left:2938.90px;">69:51</span><div class="b" style="left:178px;top:1824px;width:2926px;height:2px;background:#d4d4d8;"></div></div><div><span class="t" id="t197" style="top:1830px;font-size:24px;line-height:24px;color:#428bca;letter-spacing:-1.216px;left:173.00px;">Sa,</span><span class="t" id="t198" style="top:1862px;font-size:24px;line-height:24px;color:#428bca;letter-spacing:0.409px;left:179.60px;">11.10.</span><span class="t" id="t199" style="top:1845px;font-size:28px;line-height:28px;letter-spacing:0.280px;left:2658.90px;">00:00</span><span class="t" id="t200" style="top:1845px;font-size:28px;line-height:28px;letter-spacing:0.280px;left:2799.10px;">00:00</span><span class="t" id="t201" style="top:1845px;font-size:28px;line-height:28px;letter-spacing:0.280px;left:2938.90px;">69:51</span><div class="b" style="left:178px;top:1890px;width:2926px;height:2px;background:#d4d4d8;"></div></div><div><span class="t" id="t202" style="top:1896px;font-size:24px;line-height:24px;color:#428bca;letter-spacing:-1.216px;left:173.00px;">So,</span><span class="t" id="t203" style="top:1928px;font-size:24px;line-height:24px;color:#428bca;letter-spacing:0.053px;left:179.60px;">12.10.</span><span class="t" id="t204" style="top:1911px;font-size:28px;line-height:28px;letter-spacing:0.280px;left:2658.90px;">00:00</span><span class="t" id="t205" style="top:1911px;font-size:28px;line-height:28px;letter-spacing:0.280px;left:2799.10px;">00:00</span><span class="t" id="t206" style="top:1911px;font-size:28px;line-height:28px;letter-spacing:0.280px;left:2938.90px;">69:51</span><div class="b" style="left:178px;top:1956px;width:2926px;height:2px;background:#d4d4d8;"></div></div></section></main>
<script>(function(){var w=window.innerWidth;if(w&&Math.abs(w-3162)>2)document.documentElement.style.zoom=w/3162;})();</script>
</body></html>
